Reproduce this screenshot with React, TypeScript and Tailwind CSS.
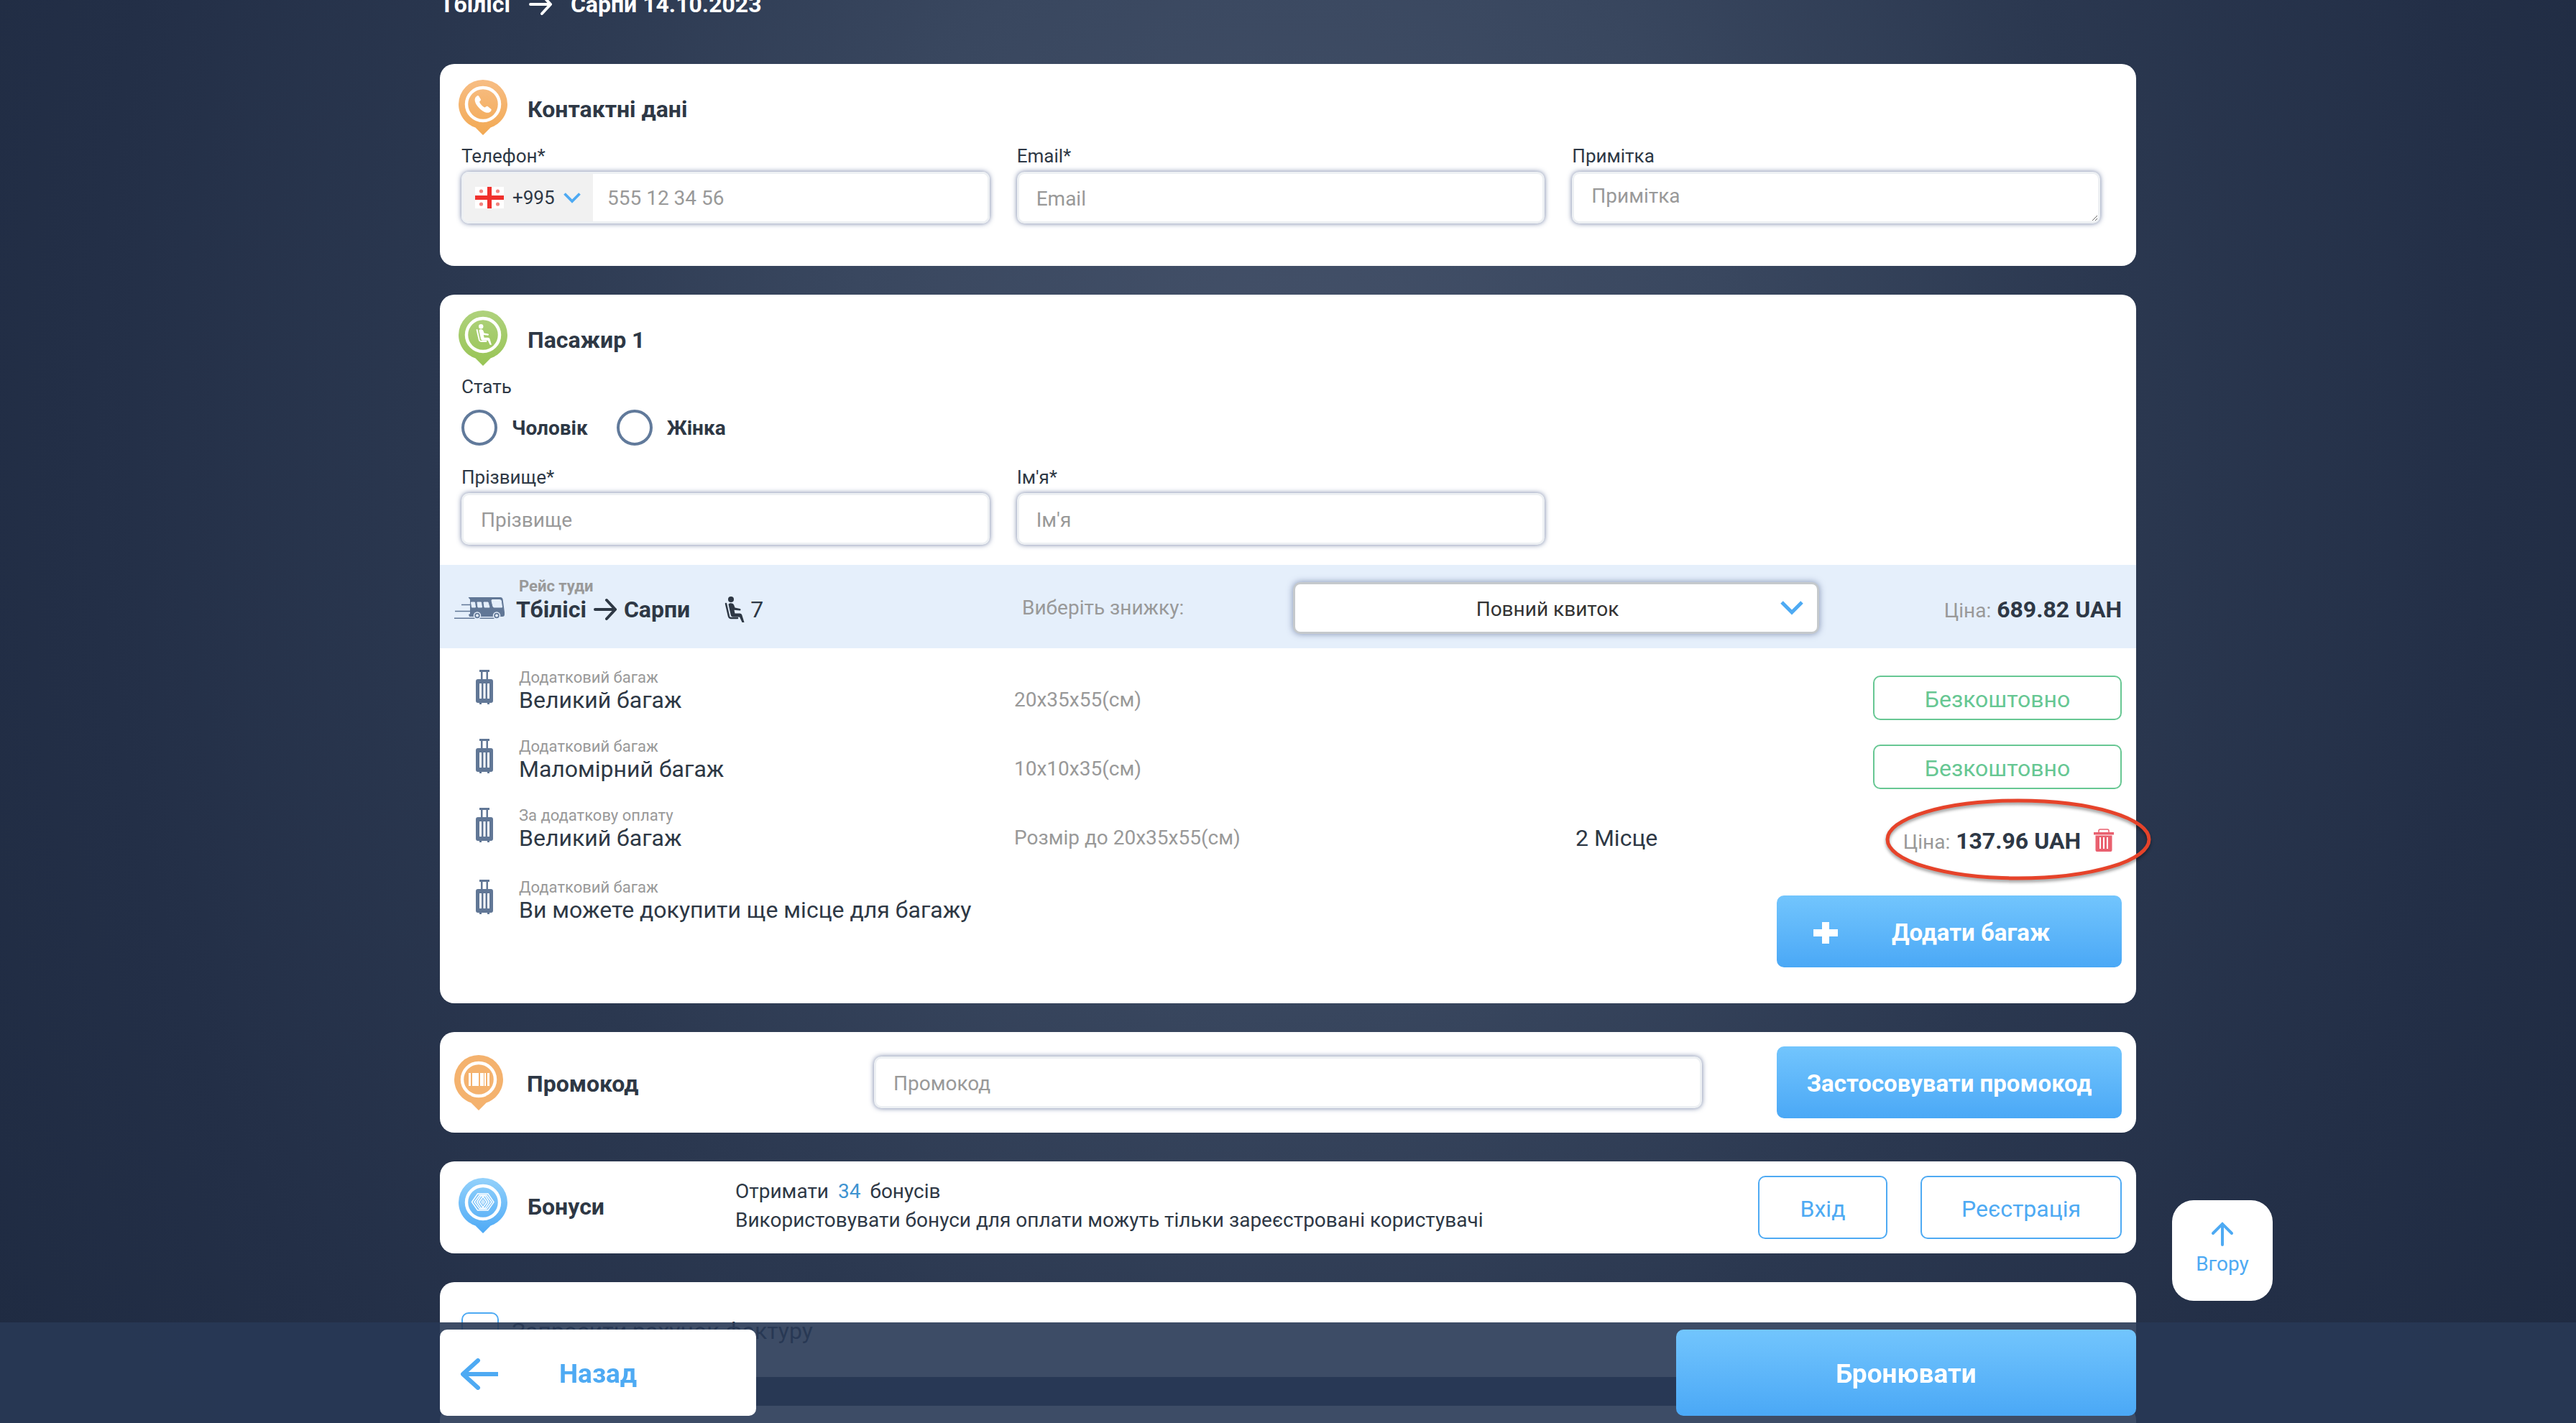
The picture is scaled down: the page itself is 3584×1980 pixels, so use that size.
import type { ReactNode } from 'react';

const inputClass =
  'w-full h-[72px] rounded-[10px] border-3 border-[#edf0f3] bg-white px-6 text-[28px] text-[#2e3440] placeholder:text-[#999999] shadow-[0_0_7px_rgba(62,80,130,0.75)] outline-none';
const blueButton =
  'rounded-[10px] bg-linear-to-b from-[#72c5fd] to-[#4aa8f6] pt-1 font-bold text-white';
const outlineButton =
  'h-[88px] rounded-[10px] border-2 border-[#4eaaf3] pt-1 text-[32px] text-[#4eaaf3]';

const baggage = [
  { note: 'Додатковий багаж', name: 'Великий багаж', size: '20x35x55(см)' },
  { note: 'Додатковий багаж', name: 'Маломірний багаж', size: '10x10x35(см)' },
];

function Pin({ id, from, to, children }: { id: string; from: string; to: string; children: ReactNode }) {
  return (
    <svg viewBox="0 0 68 77" className="w-[68px] h-[77px] shrink-0" aria-hidden="true">
      <defs>
        <linearGradient id={id} x1="0" y1="0" x2="0" y2="1">
          <stop offset="0" stopColor={from} />
          <stop offset="1" stopColor={to} />
        </linearGradient>
      </defs>
      <path
        d="M34 0a34 34 0 0 1 34 34c0 15-10 28-23.500 32.500L34 77 23.500 66.500C10 62 0 49 0 34A34 34 0 0 1 34 0z"
        fill={`url(#${id})`}
      />
      <circle cx="34" cy="34" r="23" fill="none" stroke="#fff" strokeWidth="4.500" />
      {children}
    </svg>
  );
}

function SeatShape() {
  return (
    <g>
      <circle cx="9" cy="4" r="4" />
      <path d="M2 10l4 17.500c.4 1.500 1.300 2.500 3 2.500h9" fill="none" stroke="currentColor" strokeWidth="2.500" strokeLinecap="round" />
      <path d="M5.500 11c1-2.500 6-2.500 7.500.5l1.500 4 7 1.500c1.600.4 1.300 2.800-.4 2.600l-7.600-.8 1 4.700h6.500c2 0 3 1 3.400 2.500L27.500 36h-3L21 28.500h-9c-1.800 0-2.800-1-3.200-2.500z" />
    </g>
  );
}

function LuggageIcon() {
  return (
    <svg viewBox="0 0 24 48" className="ml-[30px] mt-[10px] w-6 h-12" fill="#617796" aria-hidden="true">
      <path d="M5 0h14v3H5zM7 3h2.500v10H7zM14.500 3H17v10h-2.500z" />
      <path
        fillRule="evenodd"
        d="M3 13h18a3 3 0 0 1 3 3v27a3 3 0 0 1-3 3H3a3 3 0 0 1-3-3V16a3 3 0 0 1 3-3zM5 19v21h3V19zM10.500 19v21h3V19zM16 19v21h3V19z"
      />
      <path d="M5 46h3v2H5zM16 46h3v2h-3z" />
    </svg>
  );
}

function BusIcon() {
  return (
    <svg viewBox="0 0 70 30" className="w-[70px] h-[30px]" aria-hidden="true">
      <path d="M20 0h44q3 0 3.600 3L70 21v3q0 3-3 3H21l-1-3 2-1V3q-3-3-2-3z" fill="#617796" />
      <path d="M10 10.500h13M1 19.500h22M0 29.300h60" stroke="#617796" strokeWidth="1.400" />
      <path
        d="M23.500 7h5l1 7h-5zM32 7h5.500l1 7H33zM41 7h6l2 7h-7zM53 3.500h10.500q1.500 0 1.800 1.500l1.200 9H55.500q-1.500 0-1.700-1.500L52 5q-.2-1.500 1-1.500z"
        fill="#e5effb"
        stroke="#e5effb"
        strokeLinejoin="round"
      />
      <circle cx="32" cy="25.500" r="4.500" fill="#617796" stroke="#e5effb" strokeWidth="1.500" />
      <circle cx="59" cy="25.500" r="4.500" fill="#617796" stroke="#e5effb" strokeWidth="1.500" />
      <circle cx="32" cy="25.500" r="2" fill="#e5effb" />
      <circle cx="59" cy="25.500" r="2" fill="#e5effb" />
    </svg>
  );
}

function RouteArrow() {
  return (
    <svg viewBox="0 0 32 32" className="w-8 h-8" fill="none" stroke="currentColor" strokeWidth="4" strokeLinecap="round" aria-hidden="true">
      <path d="M2 16h27M18 3l12 13-12 13" />
    </svg>
  );
}

function Chevron({ className }: { className: string }) {
  return (
    <svg viewBox="0 0 32 20" className={className} fill="none" stroke="#4eaaf3" strokeWidth="5" aria-hidden="true">
      <path d="M2 2l14 14L30 2" />
    </svg>
  );
}

function Card({ className = '', children }: { className?: string; children?: ReactNode }) {
  return <section className={`mb-10 rounded-[20px] bg-white ${className}`}>{children}</section>;
}

function CardTitle({ children }: { children: ReactNode }) {
  return <h2 className="pt-1 text-[32px] font-bold">{children}</h2>;
}

function Field({ id, label, children }: { id: string; label: string; children: ReactNode }) {
  return (
    <div className="flex flex-col">
      <label htmlFor={id} className="mb-[6px] text-[26px] leading-8">
        {label}
      </label>
      {children}
    </div>
  );
}

function BaggageText({ note, name }: { note: string; name: string }) {
  return (
    <div className="pt-[6px]">
      <p className="text-[22px] leading-[30px] text-[#999999]">{note}</p>
      <p className="text-[32px] leading-8">{name}</p>
    </div>
  );
}

function Gender({ label }: { label: string }) {
  return (
    <label className="flex items-center gap-5 text-[28px] font-bold">
      <input type="radio" name="gender" className="size-[50px] appearance-none rounded-full border-4 border-[#617a9b] checked:bg-[#617a9b]" />
      <span className="pt-[2px]">{label}</span>
    </label>
  );
}

export default function App() {
  return (
    <div className="h-screen overflow-hidden bg-[radial-gradient(ellipse_58%_130%_at_50%_30%,#445169_0%,#39475f_30%,#2b3850_55%,#232f47_80%,#1f2b42_100%)] font-['Roboto','Liberation_Sans',sans-serif] text-[#2e3845]">
      <main className="mx-auto -mt-[14px] max-w-[2360px]">
        <h1 className="mb-[63px] flex h-10 items-center text-[32px] font-bold text-white">
          Тбілісі
          <span className="mx-[26px]">
            <RouteArrow />
          </span>
          Сарпи 14.10.2023
        </h1>

        <Card className="pt-[22px] pr-[50px] pb-[59px] pl-[30px]">
          <div className="-ml-1 flex items-center gap-7">
            <Pin id="pinPhone" from="#f7bd84" to="#f2a953">
              <path
                d="M24.500 23.500c-3 2.500-2.500 8 2.500 14s11 9.500 15.500 8c2.500-1 3.500-3 3-4.500l-5-4c-1.500-.8-2.500.8-4 1.500-3-1-6.500-5-7.500-8 1-1 2.500-2 1.800-3.500l-2.800-4.500c-.8-1-2.300-.500-3.500 1z"
                fill="#fff"
              />
            </Pin>
            <CardTitle>Контактні дані</CardTitle>
          </div>
          <div className="mt-[13px] grid grid-cols-3 gap-[38px]">
            <Field id="phone" label="Телефон*">
              <div className="flex h-[72px] overflow-hidden rounded-[10px] border-3 border-[#edf0f3] shadow-[0_0_7px_rgba(62,80,130,0.75)]">
                <button type="button" className="flex w-[180px] items-center bg-[#f1f1f1] pl-4 text-[26px]">
                  <svg viewBox="0 0 40 30" className="mr-3 w-10 h-[30px]" aria-hidden="true">
                    <path d="M0 0h40v30H0z" fill="#fff" />
                    <path d="M17 0h6v30h-6zM0 12h40v6H0z" fill="#f0302c" />
                    <g fill="#f2837f">
                      <circle cx="8.500" cy="6" r="2.600" />
                      <circle cx="31.500" cy="6" r="2.600" />
                      <circle cx="8.500" cy="24" r="2.600" />
                      <circle cx="31.500" cy="24" r="2.600" />
                    </g>
                  </svg>
                  +995
                  <Chevron className="ml-3 w-6 h-[15px]" />
                </button>
                <input id="phone" type="tel" placeholder="555 12 34 56" className="flex-1 bg-white px-5 pt-[2px] text-[28px] outline-none placeholder:text-[#999999]" />
              </div>
            </Field>
            <Field id="email" label="Email*">
              <input id="email" type="email" placeholder="Email" className={`${inputClass} pt-[2px]`} />
            </Field>
            <Field id="note" label="Примітка">
              <textarea id="note" placeholder="Примітка" className={`${inputClass} resize py-[10px]`} />
            </Field>
          </div>
        </Card>

        <Card className="pt-[22px] pb-[50px]">
          <div className="pr-[50px] pb-7 pl-[30px]">
            <div className="-ml-1 flex items-center gap-7">
              <Pin id="pinSeat" from="#afd27d" to="#98c455">
                <g transform="translate(24 19) scale(.8)" fill="#fff" color="#fff">
                  <SeatShape />
                </g>
              </Pin>
              <CardTitle>Пасажир 1</CardTitle>
            </div>
            <fieldset>
              <legend className="pt-[13px] text-[26px] leading-8">Стать</legend>
              <div className="mt-4 flex gap-10">
                <Gender label="Чоловік" />
                <Gender label="Жінка" />
              </div>
            </fieldset>
            <div className="mt-7 grid grid-cols-3 gap-[38px]">
              <Field id="surname" label="Прізвище*">
                <input id="surname" placeholder="Прізвище" className={`${inputClass} pt-[2px]`} />
              </Field>
              <Field id="name" label="Ім'я*">
                <input id="name" placeholder="Ім'я" className={`${inputClass} pt-[2px]`} />
              </Field>
            </div>
          </div>

          <div className="grid h-[116px] grid-cols-[86px_704fr_377fr_732fr_421fr] items-center bg-[#e5effb] px-5 pt-1">
            <BusIcon />
            <div className="pb-5">
              <p className="pl-1 text-[22px] leading-6 font-bold text-[#999999]">Рейс туди</p>
              <p className="flex h-10 items-center text-[32px] font-bold">
                Тбілісі
                <span className="mx-[10px]">
                  <RouteArrow />
                </span>
                Сарпи
                <svg viewBox="0 0 28 36" className="mr-2 ml-12 w-7 h-9" fill="currentColor" aria-hidden="true">
                  <SeatShape />
                </svg>
                <span className="font-normal">7</span>
              </p>
            </div>
            <label htmlFor="discount" className="text-[28px] text-[#999999]">
              Виберіть знижку:
            </label>
            <div className="relative">
              <select
                id="discount"
                className="h-[72px] w-full appearance-none rounded-[10px] border-3 border-[#c5c9cc] bg-white pt-1 pr-6 text-center text-[28px] text-[#333333] shadow-[0_0_10px_rgba(62,80,130,0.6)]"
              >
                <option>Повний квиток</option>
              </select>
              <Chevron className="pointer-events-none absolute top-[26px] right-[22px] w-8 h-5" />
            </div>
            <p className="pt-1 text-right text-[32px] font-bold">
              <span className="text-[28px] font-normal text-[#999999]">Ціна:</span> 689.82 UAH
            </p>
          </div>

          <ul className="px-5 pt-5">
            {baggage.map((item) => (
              <li key={item.name} className="grid h-24 grid-cols-[90px_689fr_781fr_760fr]">
                <LuggageIcon />
                <BaggageText note={item.note} name={item.name} />
                <p className="pt-9 text-[28px] leading-8 text-[#999999]">{item.size}</p>
                <p className="mt-[18px] flex h-[62px] w-[346px] items-center justify-center justify-self-end rounded-[10px] border-2 border-[#67c793] pt-1 text-[32px] text-[#67c793]">
                  Безкоштовно
                </p>
              </li>
            ))}
            <li className="relative grid h-24 grid-cols-[90px_689fr_781fr_760fr]">
              <LuggageIcon />
              <BaggageText note="За додаткову оплату" name="Великий багаж" />
              <p className="pt-9 text-[28px] leading-8 text-[#999999]">Розмір до 20x35x55(см)</p>
              <div className="flex items-start justify-between pt-9 text-[32px] leading-8">
                <p>2 Місце</p>
                <div className="flex items-center pr-[11px]">
                  <p className="pt-1 font-bold">
                    <span className="text-[28px] font-normal text-[#999999]">Ціна:</span> 137.96 UAH
                  </p>
                  <button type="button" aria-label="Видалити" className="ml-[18px]">
                    <svg viewBox="0 0 28 32" className="w-7 h-8" fill="#e9606f">
                      <path d="M7 5V3q0-2 2-2h10q2 0 2 2v2" fill="none" stroke="#e9606f" strokeWidth="1.500" />
                      <path d="M0 5h28v3.500H0z" />
                      <path fillRule="evenodd" d="M2.500 9.500h23V30q0 2-2 2h-19q-2 0-2-2zM8 12v16h2V12zM13 12v16h2V12zM18 12v16h2V12z" />
                    </svg>
                  </button>
                </div>
              </div>
              <svg
                viewBox="0 0 372 116"
                className="pointer-events-none absolute -top-[4px] -right-[42px] w-[372px] h-[116px] overflow-visible drop-shadow-[0_3px_2px_rgba(0,0,0,0.4)]"
                aria-hidden="true"
              >
                <ellipse cx="186" cy="58" rx="182" ry="54" fill="none" stroke="#e6432a" strokeWidth="5" />
              </svg>
            </li>
            <li className="mt-1 grid grid-cols-[90px_1fr_480px]">
              <LuggageIcon />
              <BaggageText note="Додатковий багаж" name="Ви можете докупити ще місце для багажу" />
              <button type="button" className={`${blueButton} mt-8 flex h-[100px] items-center pl-[51px] text-[33px]`}>
                <svg viewBox="0 0 34 30" className="mr-[75px] w-[34px] h-[30px]" fill="#fff" aria-hidden="true">
                  <path d="M12 0h10v10h12v10H22v10H12V20H0V10h12z" />
                </svg>
                Додати багаж
              </button>
            </li>
          </ul>
        </Card>

        <Card className="flex h-[140px] items-center px-5">
          <div className="flex w-[584px] items-center gap-[33px]">
            <Pin id="pinPromo" from="#f4b26e" to="#f4b26e">
              <path d="M20 25h3v18h-3zM25 25h9v18h-9zM36 25h5v18h-5zM42 25h2v18h-2zM46 25h3v18h-3z" fill="#fff" />
            </Pin>
            <CardTitle>
              <label htmlFor="promo">Промокод</label>
            </CardTitle>
          </div>
          <div className="mr-[104px] flex-1">
            <input id="promo" placeholder="Промокод" className={`${inputClass} pt-[2px]`} />
          </div>
          <button type="button" className={`${blueButton} h-[100px] w-[480px] text-[33px]`}>
            Застосовувати промокод
          </button>
        </Card>

        <Card className="flex h-32 items-center pr-5 pl-[26px]">
          <div className="flex w-[385px] items-center gap-7 pb-[6px]">
            <Pin id="pinBonus" from="#93d1fb" to="#4eaaf6">
              <g fill="none" stroke="#fff" strokeWidth="1.500">
                <path d="M18.500 33.500L26.500 22H41l8 11.500L41 45H26.500z" />
                <path d="M22 33.500l7-9.500h10l7 9.500-7 9.500H29z" />
                <path d="M25.500 33.500L31 25h6l5.500 8.500L37 42h-6z" />
                <path d="M28.500 33.500L34 26l5.500 7.500L34 41z" />
              </g>
              <path d="M30.500 33.500l3.500-4.500 3.500 4.500-3.500 4.500z" fill="#cfe8fc" />
            </Pin>
            <CardTitle>Бонуси</CardTitle>
          </div>
          <div className="flex-1 pb-1 text-[28px] leading-10">
            <p>
              Отримати <span className="mx-[6px] text-[#3f94d1]">34</span> бонусів
            </p>
            <p>Використовувати бонуси для оплати можуть тільки зареєстровані користувачі</p>
          </div>
          <button type="button" className={`${outlineButton} mr-[46px] w-[180px]`}>
            Вхід
          </button>
          <button type="button" className={`${outlineButton} w-[280px]`}>
            Реєстрація
          </button>
        </Card>

        <Card className="h-[132px] pt-[42px] pl-[30px]">
          <label className="flex items-center gap-[18px] text-[32px]">
            <input type="checkbox" className="size-[52px] appearance-none rounded-[10px] border-2 border-[#4eaaf3]" />
            Запросити рахунок-фактуру
          </label>
        </Card>
        <Card className="h-40" />
      </main>

      <button
        type="button"
        className="fixed right-[422px] bottom-[170px] flex size-[140px] flex-col items-center justify-center gap-1 rounded-[30px] bg-white text-[28px] text-[#4eaaf3]"
      >
        <svg viewBox="0 0 32 34" className="w-8 h-[34px]" fill="none" stroke="currentColor" strokeWidth="4" strokeLinecap="round" aria-hidden="true">
          <path d="M16 32V3M3 16L16 3l13 13" />
        </svg>
        Вгору
      </button>

      <footer className="fixed inset-x-0 bottom-0 h-[140px] bg-[#283855]/90 pt-[10px]">
        <div className="mx-auto flex max-w-[2360px] justify-between">
          <button type="button" className="flex h-[120px] w-[440px] items-center rounded-[10px] bg-white pt-1 pl-[29px] text-[37px] font-bold text-[#4eaaf3]">
            <svg viewBox="0 0 52 44" className="mr-[85px] w-[52px] h-11" fill="none" stroke="currentColor" strokeWidth="6" aria-hidden="true">
              <path d="M52 22H3" />
              <path d="M24 3L3 22l21 19" strokeLinecap="round" strokeLinejoin="round" />
            </svg>
            Назад
          </button>
          <button type="button" className={`${blueButton} h-[120px] w-[640px] text-[37px]`}>
            Бронювати
          </button>
        </div>
      </footer>
    </div>
  );
}
